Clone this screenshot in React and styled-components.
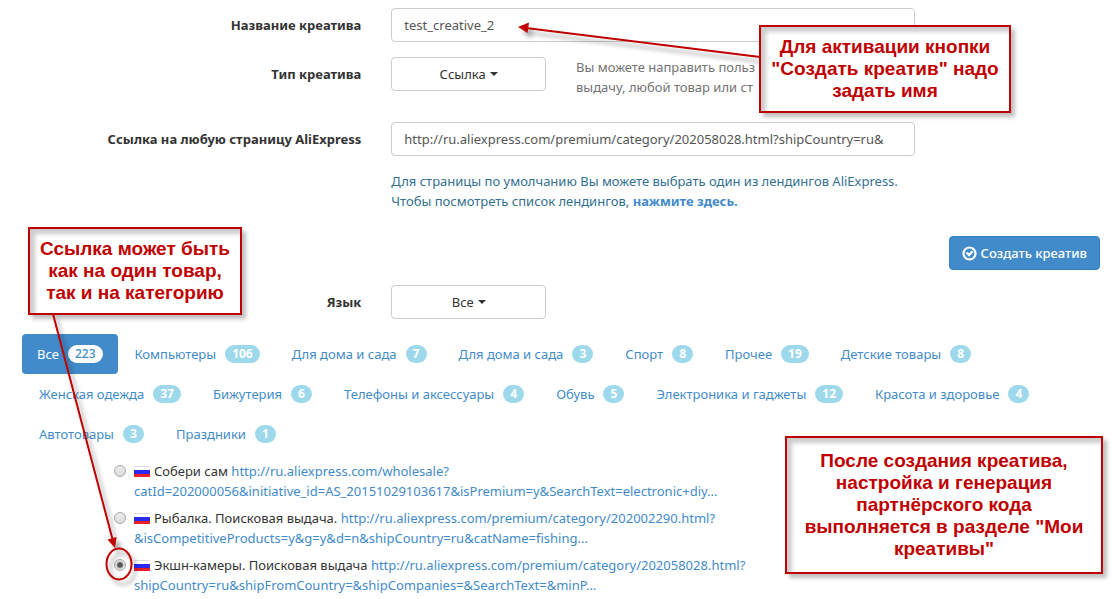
import React, { useState } from "react";
import styled, { createGlobalStyle } from "styled-components";

const GlobalStyle = createGlobalStyle`
  *, *::before, *::after {
    box-sizing: border-box;
  }

  body {
    margin: 0;
    background: #ffffff;
    color: #333333;
    font-family: "Trebuchet MS", "Noto Sans", sans-serif;
    font-size: 13px;
    line-height: 20px;
  }

  a {
    color: #428bca;
    text-decoration: none;
  }
`;

const Page = styled.main`
  position: relative;
  padding: 8px 0 4px 7px;
  overflow: hidden;
`;

const Form = styled.form`
  display: flex;
  flex-direction: column;
  gap: 15px;
  margin-bottom: 15px;
`;

const Row = styled.div`
  display: grid;
  grid-template-columns: repeat(12, minmax(0, 1fr));
`;

const Cell = styled.div`
  grid-column: span ${props => props.span};
  padding: 0 15px;
`;

const Label = styled.label`
  grid-column: span 4;
  padding: 7px 15px 0;
  font-weight: 700;
  text-align: right;
`;

const TextInput = styled.input`
  display: block;
  width: 100%;
  height: 34px;
  padding: 6px 12px;
  border: 1px solid #cccccc;
  border-radius: 4px;
  background: #ffffff;
  color: #555555;
  font: inherit;
`;

const SelectBox = styled.div`
  display: flex;
  justify-content: center;
  align-items: center;
  gap: 4px;
  height: 34px;
  border: 1px solid #cccccc;
  border-radius: 4px;
`;

const Select = styled.select`
  appearance: none;
  field-sizing: content;
  padding: 0;
  border: 0;
  background: transparent;
  color: #333333;
  font: inherit;
`;

const Caret = styled.span`
  border-top: 4px solid #333333;
  border-right: 4px solid transparent;
  border-left: 4px solid transparent;
`;

const Help = styled.p`
  margin: 0 0 10px;
  color: ${props => (props.$info ? "#31708f" : "#737373")};
  white-space: nowrap;
`;

const Actions = styled.div`
  display: flex;
  justify-content: flex-end;
  padding: 0 15px;
`;

const SubmitButton = styled.button`
  display: flex;
  align-items: center;
  gap: 4px;
  height: 34px;
  padding: 0 12px;
  border: 1px solid #357ebd;
  border-radius: 4px;
  background: #428bca;
  color: #ffffff;
  font: inherit;
  font-weight: 500;
`;

const Tabs = styled.nav`
  display: flex;
  flex-wrap: wrap;
  padding: 0 15px;
`;

const Tab = styled.a`
  display: flex;
  align-items: center;
  gap: 9px;
  height: 40px;
  padding: 0 15px;
  border-radius: 4px;
  background: ${props => (props.$active ? "#428bca" : "transparent")};
  color: ${props => (props.$active ? "#ffffff" : "#428bca")};

  & + & {
    margin-left: 2px;
  }
`;

const Badge = styled.span`
  min-width: 21px;
  padding: 0 7px;
  border-radius: 10px;
  background: ${props => (props.$active ? "#ffffff" : "#9dd9eb")};
  color: ${props => (props.$active ? "#428bca" : "#ffffff")};
  font-size: 12px;
  font-weight: ${props => (props.$active ? 500 : 700)};
  line-height: 18px;
  text-align: center;
`;

const Links = styled.div`
  display: flex;
  flex-direction: column;
  gap: 7px;
  padding: 7px 15px 0 107px;
`;

const LinkRow = styled.div`
  display: flex;
  align-items: flex-start;
  gap: 8px;
`;

const Radio = styled.input`
  appearance: none;
  flex: none;
  width: 12px;
  height: 12px;
  margin: 4px 0 0;
  border: 1px solid #a8a8a8;
  border-radius: 50%;
  background: linear-gradient(#ececec, #dcdcdc);

  &:checked {
    background: radial-gradient(circle, #555555 0 2px, #e6e6e6 4px);
  }
`;

const Flag = styled.svg`
  margin-right: 4px;
  vertical-align: -1px;
`;

const Callout = styled.aside`
  position: absolute;
  top: ${props => props.$top}px;
  left: ${props => props.$left}px;
  width: ${props => props.$width}px;
  padding: ${props => props.$pad}px 0;
  border: 2px solid #c00000;
  background: #ffffff;
  box-shadow: 4px 4px 4px rgba(0, 0, 0, 0.25), inset 5px 5px 4px rgba(0, 0, 0, 0.2);
  color: #c00000;
  font-family: "Liberation Sans", Arial, sans-serif;
  font-size: 19px;
  font-weight: 700;
  line-height: 22px;
  text-align: center;
`;

const Arrow = styled.svg`
  position: absolute;
  top: ${props => props.$top}px;
  left: ${props => props.$left}px;
  overflow: visible;
  pointer-events: none;
  filter: drop-shadow(4px 5px 2px rgba(0, 0, 0, 0.35));
`;

const categories = [
  ["Все", 223],
  ["Компьютеры", 106],
  ["Для дома и сада", 7],
  ["Для дома и сада", 3],
  ["Спорт", 8],
  ["Прочее", 19],
  ["Детские товары", 8],
  ["Женская одежда", 37],
  ["Бижутерия", 6],
  ["Телефоны и аксессуары", 4],
  ["Обувь", 5],
  ["Электроника и гаджеты", 12],
  ["Красота и здоровье", 4],
  ["Автотовары", 3],
  ["Праздники", 1]
];

const landings = [
  {
    title: "Собери сам",
    url: [
      "http://ru.aliexpress.com/wholesale?",
      "catId=202000056&initiative_id=AS_20151029103617&isPremium=y&SearchText=electronic+diy..."
    ]
  },
  {
    title: "Рыбалка. Поисковая выдача.",
    url: [
      "http://ru.aliexpress.com/premium/category/202002290.html?",
      "&isCompetitiveProducts=y&g=y&d=n&shipCountry=ru&catName=fishing..."
    ]
  },
  {
    title: "Экшн-камеры. Поисковая выдача",
    url: [
      "http://ru.aliexpress.com/premium/category/202058028.html?",
      "shipCountry=ru&shipFromCountry=&shipCompanies=&SearchText=&minP..."
    ]
  }
];

function Dropdown({ id, options }) {
  return (
    <SelectBox>
      <Select id={id}>
        {options.map(option => (
          <option key={option}>{option}</option>
        ))}
      </Select>
      <Caret />
    </SelectBox>
  );
}

function OkCircle() {
  return (
    <svg width="15" height="15" viewBox="0 0 15 15" aria-hidden="true">
      <circle cx="7.5" cy="7.5" r="6" fill="none" stroke="#fff" strokeWidth="2.2" />
      <path d="M3.800 7.300 5.400 5.800l1.600 1.500L9.800 4.400l1.700 1.700L7 10.800z" fill="#fff" />
    </svg>
  );
}

function RussianFlag() {
  return (
    <Flag width="16" height="11" viewBox="0 0 16 11" aria-hidden="true">
      <path d="M0 0h16v11H0z" fill="#dddddd" />
      <path d="M0 1h16v3H0z" fill="#ffffff" />
      <path d="M0 4h16v4H0z" fill="#2b2bf0" />
      <path d="M0 8h16v3H0z" fill="#e8202a" />
    </Flag>
  );
}

export default function App() {
  const [name, setName] = useState("test_creative_2");
  const [link, setLink] = useState(
    "http://ru.aliexpress.com/premium/category/202058028.html?shipCountry=ru&"
  );
  const [landing, setLanding] = useState(2);

  return (
    <Page>
      <GlobalStyle />
      <Form id="creative" onSubmit={e => e.preventDefault()}>
        <Row>
          <Label htmlFor="name">Название креатива</Label>
          <Cell span={6}>
            <TextInput id="name" value={name} onChange={e => setName(e.target.value)} />
          </Cell>
        </Row>
        <Row>
          <Label htmlFor="type">Тип креатива</Label>
          <Cell span={2}>
            <Dropdown id="type" options={["Ссылка", "Баннер"]} />
          </Cell>
          <Cell span={4}>
            <Help>
              Вы можете направить польз
              <br />
              выдачу, любой товар или ст
            </Help>
          </Cell>
        </Row>
        <Row>
          <Label htmlFor="link">Ссылка на любую страницу AliExpress</Label>
          <Cell span={6}>
            <TextInput id="link" value={link} onChange={e => setLink(e.target.value)} />
          </Cell>
        </Row>
        <Row>
          <Cell span={4} />
          <Cell span={6}>
            <Help $info>
              Для страницы по умолчанию Вы можете выбрать один из лендингов AliExpress.
              <br />
              Чтобы посмотреть список лендингов,{" "}
              <a href="#landings">
                <b>нажмите здесь.</b>
              </a>
            </Help>
          </Cell>
        </Row>
        <Actions>
          <SubmitButton type="submit">
            <OkCircle />
            Создать креатив
          </SubmitButton>
        </Actions>
        <Row>
          <Label htmlFor="language">Язык</Label>
          <Cell span={2}>
            <Dropdown id="language" options={["Все", "Русский"]} />
          </Cell>
        </Row>
      </Form>

      <Tabs>
        {categories.map(([title, count], i) => (
          <Tab key={i} href="#landings" $active={i === 0}>
            {title}
            <Badge $active={i === 0}>{count}</Badge>
          </Tab>
        ))}
      </Tabs>

      <Links id="landings">
        {landings.map((item, i) => (
          <LinkRow key={i}>
            <Radio
              type="radio"
              name="landing"
              id={`landing-${i}`}
              checked={landing === i}
              onChange={() => setLanding(i)}
            />
            <div>
              <label htmlFor={`landing-${i}`}>
                <RussianFlag />
                {item.title}
              </label>{" "}
              <a href="#landings">
                {item.url[0]}
                <br />
                {item.url[1]}
              </a>
            </div>
          </LinkRow>
        ))}
      </Links>

      <Arrow $top={26} $left={518} width="242" height="32">
        <path d="M8 2 242 31" stroke="#c00000" strokeWidth="2" />
        <path d="M0 1 11-3.500 9.500 7z" fill="#c00000" />
      </Arrow>
      <Callout $top={25} $left={759} $width={252} $pad={9}>
        Для активации кнопки
        <br />
        "Создать креатив" надо
        <br />
        задать имя
      </Callout>
      <Callout $top={227} $left={28} $width={214} $pad={9}>
        Ссылка может быть
        <br />
        как на один товар,
        <br />
        так и на категорию
      </Callout>
      <Arrow $top={314} $left={53} width="80" height="267">
        <path d="M0 0 60 227" stroke="#c00000" strokeWidth="2" />
        <path d="M62 234 54.500 225.500 63.500 223z" fill="#c00000" />
        <ellipse cx="66" cy="250" rx="12.500" ry="15.500" fill="none" stroke="#c00000" strokeWidth="2" />
      </Arrow>
      <Callout $top={436} $left={785} $width={318} $pad={12}>
        После создания креатива,
        <br />
        настройка и генерация
        <br />
        партнёрского кода
        <br />
        выполняется в разделе "Мои
        <br />
        креативы"
      </Callout>
    </Page>
  );
}
